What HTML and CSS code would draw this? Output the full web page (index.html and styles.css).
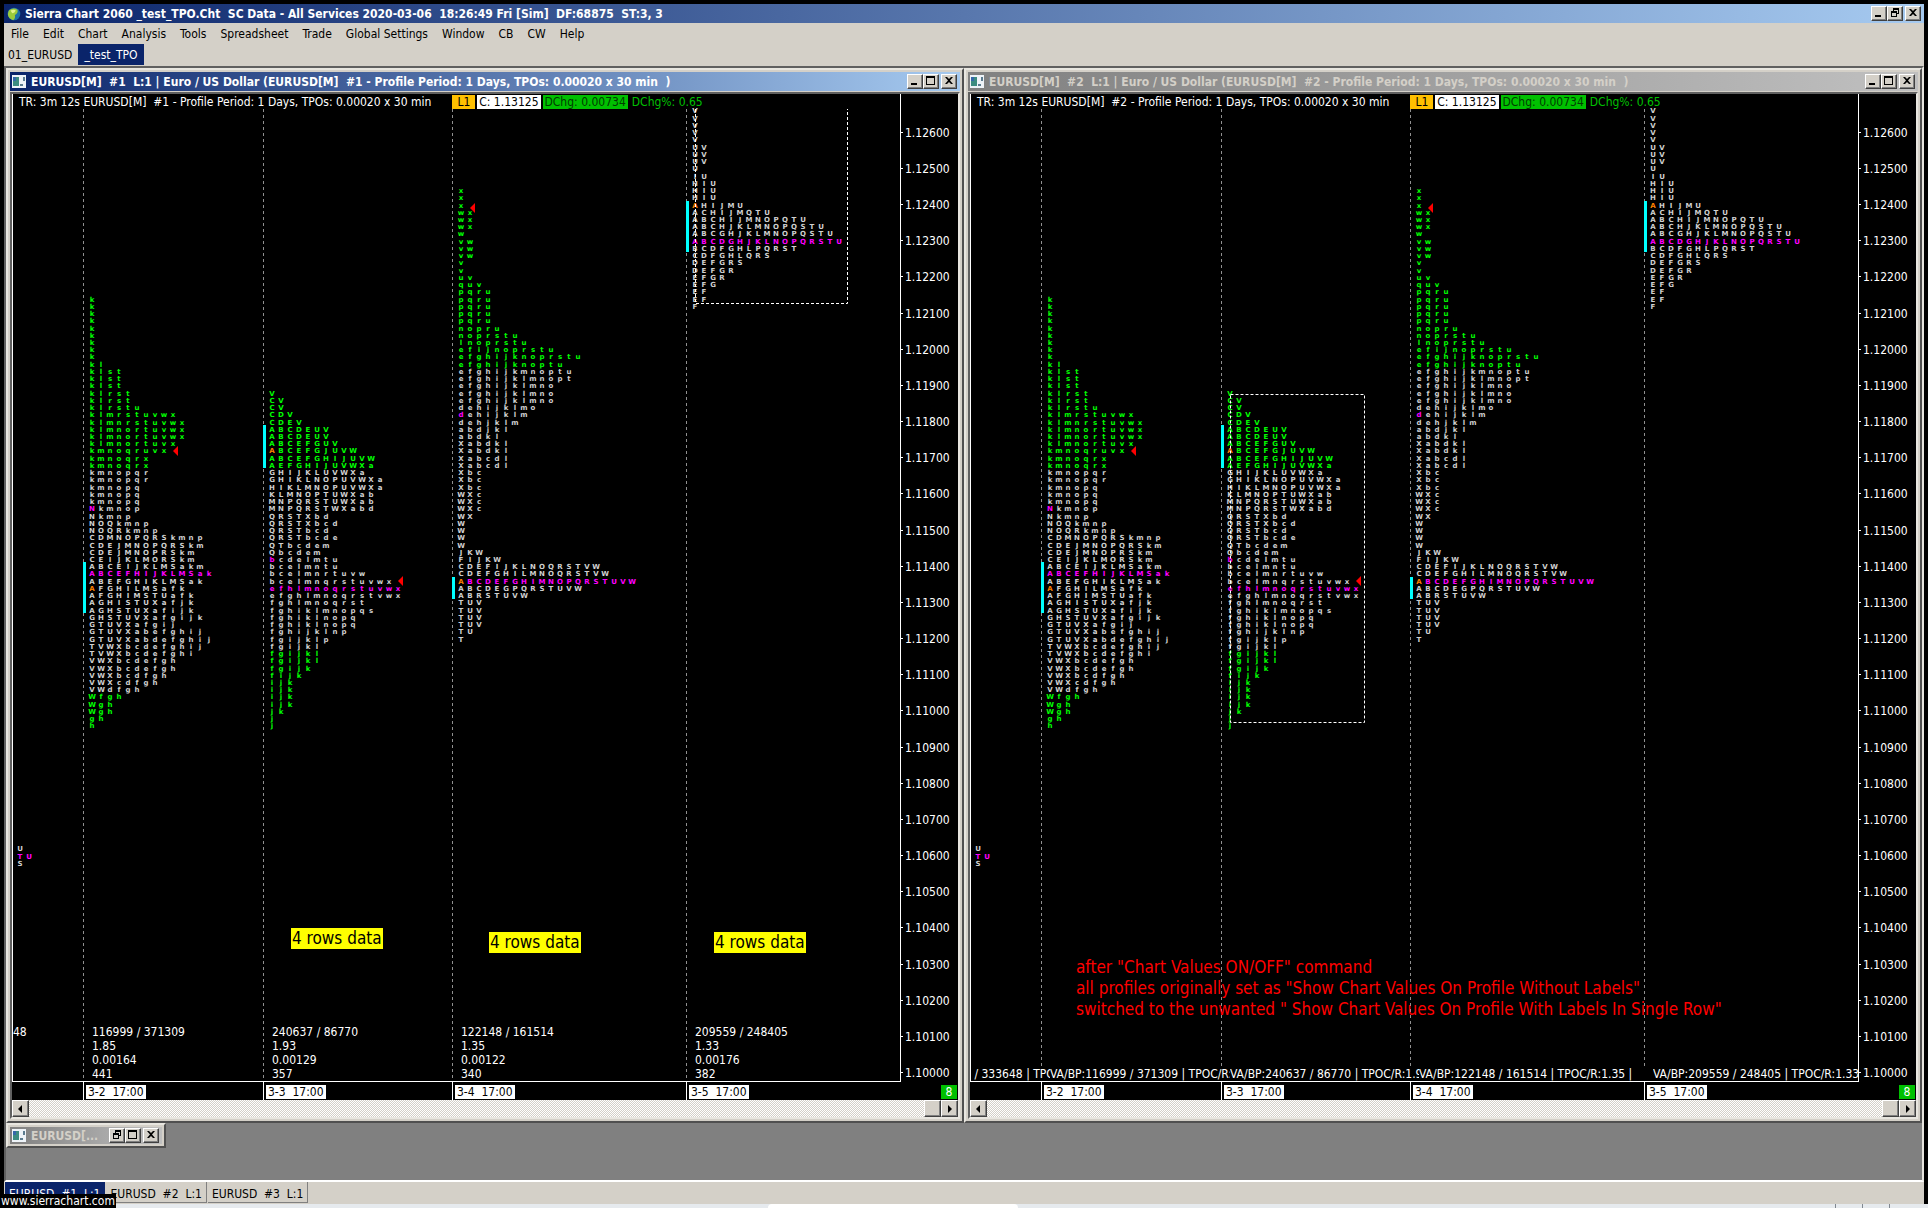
FILE: index.html
```html
<!DOCTYPE html>
<html lang="en">
<head>
<meta charset="utf-8">
<title>Sierra Chart 2060</title>
<link rel="stylesheet" href="styles.css">
</head>
<body>
<div class="app">
  <header class="titlebar titlebar-main">
    <svg class="app-icon" viewBox="0 0 16 16" aria-hidden="true"><circle cx="8" cy="8" r="7.2" fill="#1c6fa8"/><path d="M2 4Q7 0 12 3Q13 7 9 9Q10 13 7 15Q1 13 1 8Z" fill="#9ccb3b"/><path d="M4 4Q8 2 10 4Q9 7 6 7Z" fill="#e4f28c"/></svg>
    <h1 class="title-text">Sierra Chart 2060 _test_TPO.Cht  SC Data - All Services 2020-03-06  18:26:49 Fri [Sim]  DF:68875  ST:3, 3</h1>
    <div class="win-buttons">
      <button class="wb" aria-label="Minimize"><svg viewBox="0 0 12 10"><path d="M2 7h6v2H2z"/></svg></button>
      <button class="wb" aria-label="Restore"><svg viewBox="0 0 12 10"><path d="M4 0h6v6H8V5h1V2H5v1H4zM2 3h6v6H2zM3 5v3h4V5z" fill-rule="evenodd"/></svg></button>
      <button class="wb wb-close" aria-label="Close"><svg viewBox="0 0 12 10"><path d="M2 1h2l2 2 2-2h2L7 4.500l3 3.500H8L6 6 4 8H2l3-3.500z"/></svg></button>
    </div>
  </header>
  <nav class="menubar">
    <button>File</button><button>Edit</button><button>Chart</button><button>Analysis</button><button>Tools</button><button>Spreadsheet</button><button>Trade</button><button>Global Settings</button><button>Window</button><button>CB</button><button>CW</button><button>Help</button>
  </nav>
  <div class="booktabs">
    <button>01_EURUSD</button><button class="active">_test_TPO</button>
  </div>

  <main class="mdi">
    <div class="windows">
      <section class="window" id="w1">
        <header class="titlebar">
          <svg class="doc-icon" viewBox="0 0 14 13" aria-hidden="true"><path d="M0 0h14v13H0z" fill="#eef3f8"/><path d="M1 2h6v9H1z" fill="#3c8c80"/><path d="M1 2h3v4H1z" fill="#3568a8"/><path d="M8 9h3v2H8zM11 2h2v4h-2z" fill="#5c7c90"/></svg>
          <h2 class="title-text">EURUSD[M]  #1  L:1 | Euro / US Dollar (EURUSD[M]  #1 - Profile Period: 1 Days, TPOs: 0.00020 x 30 min  )</h2>
          <div class="win-buttons">
            <button class="wb" aria-label="Minimize"><svg viewBox="0 0 12 10"><path d="M2 7h6v2H2z"/></svg></button>
            <button class="wb" aria-label="Maximize"><svg viewBox="0 0 12 10"><path d="M1 0h9v9H1zM2 2v6h7V2z" fill-rule="evenodd"/></svg></button>
            <button class="wb wb-close" aria-label="Close"><svg viewBox="0 0 12 10"><path d="M2 1h2l2 2 2-2h2L7 4.500l3 3.500H8L6 6 4 8H2l3-3.500z"/></svg></button>
          </div>
        </header>
        <div class="client">
          <div class="chart">
            <div class="plot">
              <svg class="layer profiles"></svg>
              <div class="quote"><span class="q-name">TR: 3m 12s EURUSD[M]  #1 - Profile Period: 1 Days, TPOs: 0.00020 x 30 min</span><span class="q-link">L1</span><span class="q-last">C: 1.13125</span><span class="q-chg">DChg: 0.00734</span><span class="q-pct">DChg%: 0.65</span></div>
              <p class="note n1">4 rows data</p>
              <p class="note n2">4 rows data</p>
              <p class="note n3">4 rows data</p>
              <div class="stats"></div>
            </div>
            <div class="prices"><svg class="layer scale"></svg></div>
            <div class="times"><span class="feed">8</span></div>
          </div>
          <div class="scrollbar"><button class="sb" aria-label="Scroll left"><svg viewBox="0 0 5 8"><path d="M4 0v8L0 4z"/></svg></button><div class="track"></div><button class="sb" aria-label="Scroll position"></button><button class="sb" aria-label="Scroll right"><svg viewBox="0 0 5 8"><path d="M1 0v8l4-4z"/></svg></button></div>
        </div>
      </section>

      <section class="window inactive" id="w2">
        <header class="titlebar">
          <svg class="doc-icon" viewBox="0 0 14 13" aria-hidden="true"><path d="M0 0h14v13H0z" fill="#eef3f8"/><path d="M1 2h6v9H1z" fill="#3c8c80"/><path d="M1 2h3v4H1z" fill="#3568a8"/><path d="M8 9h3v2H8zM11 2h2v4h-2z" fill="#5c7c90"/></svg>
          <h2 class="title-text">EURUSD[M]  #2  L:1 | Euro / US Dollar (EURUSD[M]  #2 - Profile Period: 1 Days, TPOs: 0.00020 x 30 min  )</h2>
          <div class="win-buttons">
            <button class="wb" aria-label="Minimize"><svg viewBox="0 0 12 10"><path d="M2 7h6v2H2z"/></svg></button>
            <button class="wb" aria-label="Maximize"><svg viewBox="0 0 12 10"><path d="M1 0h9v9H1zM2 2v6h7V2z" fill-rule="evenodd"/></svg></button>
            <button class="wb wb-close" aria-label="Close"><svg viewBox="0 0 12 10"><path d="M2 1h2l2 2 2-2h2L7 4.500l3 3.500H8L6 6 4 8H2l3-3.500z"/></svg></button>
          </div>
        </header>
        <div class="client">
          <div class="chart">
            <div class="plot">
              <svg class="layer profiles"></svg>
              <div class="quote"><span class="q-name">TR: 3m 12s EURUSD[M]  #2 - Profile Period: 1 Days, TPOs: 0.00020 x 30 min</span><span class="q-link">L1</span><span class="q-last">C: 1.13125</span><span class="q-chg">DChg: 0.00734</span><span class="q-pct">DChg%: 0.65</span></div>
              <p class="remark">after "Chart Values ON/OFF" command<br>all profiles originally set as "Show Chart Values On Profile Without Labels"<br>switched to the unwanted " Show Chart Values On Profile With Labels In Single Row"</p>
              <div class="stats-row"></div>
            </div>
            <div class="prices"><svg class="layer scale"></svg></div>
            <div class="times"><span class="feed">8</span></div>
          </div>
          <div class="scrollbar"><button class="sb" aria-label="Scroll left"><svg viewBox="0 0 5 8"><path d="M4 0v8L0 4z"/></svg></button><div class="track"></div><button class="sb" aria-label="Scroll position"></button><button class="sb" aria-label="Scroll right"><svg viewBox="0 0 5 8"><path d="M1 0v8l4-4z"/></svg></button></div>
        </div>
      </section>
    </div>

    <div class="tray">
      <section class="window minimized inactive">
        <header class="titlebar">
          <svg class="doc-icon" viewBox="0 0 14 13" aria-hidden="true"><path d="M0 0h14v13H0z" fill="#eef3f8"/><path d="M1 2h6v9H1z" fill="#3c8c80"/><path d="M1 2h3v4H1z" fill="#3568a8"/><path d="M8 9h3v2H8zM11 2h2v4h-2z" fill="#5c7c90"/></svg>
          <h2 class="title-text">EURUSD[...</h2>
          <div class="win-buttons">
            <button class="wb" aria-label="Restore"><svg viewBox="0 0 12 10"><path d="M4 0h6v6H8V5h1V2H5v1H4zM2 3h6v6H2zM3 5v3h4V5z" fill-rule="evenodd"/></svg></button>
            <button class="wb" aria-label="Maximize"><svg viewBox="0 0 12 10"><path d="M1 0h9v9H1zM2 2v6h7V2z" fill-rule="evenodd"/></svg></button>
            <button class="wb wb-close" aria-label="Close"><svg viewBox="0 0 12 10"><path d="M2 1h2l2 2 2-2h2L7 4.500l3 3.500H8L6 6 4 8H2l3-3.500z"/></svg></button>
          </div>
        </header>
      </section>
    </div>
  </main>

  <div class="charttabs">
    <button class="active">EURUSD  #1  L:1</button><button>EURUSD  #2  L:1</button><button>EURUSD  #3  L:1</button>
  </div>
</div>
<footer class="desktop-strip"><span class="strip-tab"></span><span class="strip-cell"></span><span class="strip-cell"></span><span class="strip-cell"></span></footer>
<a class="watermark" href="#">www.sierrachart.com</a>
<script src="chart.js"></script>
</body>
</html>
```
FILE: styles.css
```css
* { box-sizing: border-box; }

body {
  margin: 0;
  height: 100vh;
  display: flex;
  flex-direction: column;
  background: #000;
  font-family: "DejaVu Sans Condensed", "DejaVu Sans", sans-serif;
  font-stretch: condensed;
  font-size: 12px;
  line-height: 14px;
  overflow: hidden;
}

h1, h2, p { margin: 0; font: inherit; }
button { font: inherit; color: inherit; white-space: pre; }

.app {
  flex: 1;
  min-height: 0;
  margin: 4px 4px 0;
  display: flex;
  flex-direction: column;
  background: #d4d0c8;
}

/* title bars */
.titlebar {
  height: 19px;
  flex: none;
  display: flex;
  align-items: center;
  gap: 5px;
  padding: 0 3px 0 2px;
  background: linear-gradient(90deg, #0a246a, #a6caf0);
  color: #fff;
}
.titlebar-main { gap: 4px; padding-left: 3px; }
.inactive .titlebar { background: linear-gradient(90deg, #808080, #c0c0c0); color: #d4d0c8; }
.title-text {
  flex: 1;
  min-width: 0;
  font-weight: bold;
  white-space: pre;
  overflow: hidden;
}
.app-icon { width: 14px; height: 16px; }
.doc-icon { width: 14px; height: 13px; flex: none; }
.win-buttons { display: flex; }
.wb, .sb {
  padding: 0;
  background: #d4d0c8;
  border: 1px solid;
  border-color: #fff #404040 #404040 #fff;
  box-shadow: inset -1px -1px #808080;
  display: flex;
}
.wb { width: 16px; height: 15px; }
.wb svg { width: 12px; height: 10px; margin: 1px; }
.wb-close { margin-left: 2px; }

/* menu and tabs */
.menubar { height: 21px; display: flex; gap: 14px; padding: 0 7px; }
.menubar button { border: 0; padding: 0; background: none; }
.booktabs { height: 22px; display: flex; align-items: flex-start; padding: 0 4px; }
.booktabs button { height: 21px; border: 0; padding: 0 6px 0 0; background: none; }
.booktabs .active { padding: 0 6px; background: #0a246a; color: #fff; }

/* document area */
.mdi {
  flex: 1;
  min-height: 0;
  display: flex;
  flex-direction: column;
  background: #808080;
  border: solid;
  border-width: 2px;
  border-color: #606060 #e8e6e0 #fff #606060;
}
.windows { flex: 1; min-height: 0; display: grid; grid-template-columns: 1fr 1fr; }
.window {
  min-width: 0;
  display: flex;
  flex-direction: column;
  padding: 2px;
  background: #d4d0c8;
  border: 2px solid;
  border-color: #e8e6e0 #505050 #505050 #e8e6e0;
}
.client {
  flex: 1;
  min-height: 0;
  margin-top: 1px;
  display: flex;
  flex-direction: column;
  border: 2px solid;
  border-color: #606060 #e8e6e0 #e8e6e0 #606060;
}
.tray { height: 57px; flex: none; display: flex; align-items: flex-start; }
.minimized { width: 160px; }
.minimized .titlebar { height: 17px; }

/* chart */
.chart {
  flex: 1;
  min-height: 0;
  display: grid;
  grid-template-columns: 1fr 57px;
  grid-template-rows: 1fr 18px;
  background: #000;
  color: #fff;
}
.plot {
  position: relative;
  overflow: hidden;
  border: solid #fff;
  border-width: 0 1px 1px;
}
.prices, .times { position: relative; }
.times { grid-column: 1 / 3; }
.layer { position: absolute; inset: 0; width: 100%; height: 100%; }
.scale text { fill: #fff; font-size: 12px; }
.scale path { stroke: #fff; }
.profiles text {
  font-family: "DejaVu Sans", sans-serif;
  font-stretch: normal;
  font-size: 7px;
  font-weight: bold;
  fill: #d0d0d0;
  text-anchor: middle;
}
.profiles .out { fill: #00ff00; }
.profiles .poc { fill: #ff00ff; }
.profiles .open { fill: #ff8000; }
.day { stroke: #909090; stroke-dasharray: 3 3; }
.selection { stroke: #fff; stroke-dasharray: 3 2; fill: none; }
.value-area { fill: #00ffff; }
.arrow { fill: #ff0000; }

.quote { position: relative; display: flex; gap: 2px; padding: 1px 0 0 6px; white-space: pre; }
.q-name { margin-right: 19px; }
.q-link { padding: 0 5px; background: #ffc000; color: #000; }
.q-last { padding: 0 2px; background: #fff; color: #000; }
.q-chg { padding: 0 2px; background: #00c000; color: #003c00; }
.q-pct { padding-left: 2px; color: #00c000; }

.note {
  position: absolute;
  height: 21px;
  padding: 0 1px;
  background: #ffff00;
  color: #000;
  font-size: 17px;
  line-height: 21px;
  white-space: nowrap;
}
.n1 { left: 278px; top: 834px; }
.n2 { left: 476px; top: 838px; }
.n3 { left: 701px; top: 838px; }
.remark {
  position: absolute;
  left: 105px;
  top: 863px;
  color: #ff0000;
  font-size: 17px;
  line-height: 21px;
  white-space: nowrap;
}
.stat { position: absolute; bottom: 0; white-space: pre; }
.stats-row { position: absolute; left: 0; right: 0; bottom: 0; display: flex; }
.stats-row span { flex: none; overflow: hidden; white-space: pre; background: #000; }
.stats-row span:last-child { flex: 1 1 0; min-width: 0; }

.time { position: absolute; top: -1px; bottom: 0; padding: 4px 0 0 2px; border-left: 1px solid #fff; }
.time span { display: block; height: 14px; padding: 0 2px; background: #fff; color: #000; white-space: pre; }
.feed {
  position: absolute;
  right: 1px;
  top: 3px;
  width: 16px;
  height: 14px;
  background: #00c000;
  text-align: center;
}

/* scroll bar */
.scrollbar { height: 17px; flex: none; display: flex; background: #d4d0c8; }
.track { flex: 1; background: repeating-conic-gradient(#fff 0 25%, #d4d0c8 0 50%) 0 0 / 2px 2px; }
.sb { width: 17px; height: 17px; align-items: center; justify-content: center; }
.sb svg { width: 5px; height: 8px; }

/* chart tabs */
.charttabs { height: 22px; flex: none; display: flex; padding: 0 1px; gap: 1px; }
.charttabs button {
  height: 21px;
  border: solid #808080;
  border-width: 0 1px 1px 0;
  padding: 4px 4px 0;
  background: none;
}
.charttabs .active { background: #0a246a; color: #fff; border-color: #0a246a; }

.desktop-strip { height: 4px; flex: none; display: flex; background: #e6eaee; padding-right: 12px; }
.strip-tab { width: 250px; margin-left: 768px; margin-right: auto; background: #fff; border-radius: 6px 6px 0 0; }
.strip-cell { width: 27px; border-left: 1px solid #808890; }
.watermark {
  position: absolute;
  left: 0;
  bottom: 0;
  padding: 0 1px;
  background: #000;
  color: #fff;
  text-decoration: none;
}
```
FILE: chart.js
```js
// Price scale: one TPO row is 0.0002; row 0 is 1.12600.
const ROW0 = 38.7;
const ROW_STEP = 7.234;
const COL = 9;
const rowY = n => ROW0 + n * ROW_STEP;

// Rows: text, with flags: + outside the value area, ! point of control,
// ^ first letter magenta, @ first letter is the open; *n repeats the row.
const profiles = [
  { x: -10, first: 99, rows: '.U|.TU!|.S', noLine: true },
  { x: 71, first: 23, date: '3-2  17:00', va: [468, 519], arrow: [161, 357],
    stats: ['116999 / 371309', '1.85', '0.00164', '441'],
    rows: 'k+*9|kl+|klst+*3|klrst+*2|klrstu+|klmrstuvwx+|klmnrstuvwx+|klmnortuvwx+*2|klmnortuvx+|kmnoqruvx+|kmnoqrx+*2|kmnopqr*2|kmnopq*3|Nkmnop^|Nkmnp|NOQkmnp|NOQRkmnp|CDMNOPQRSkmnp|CDEJMNOPQRSkm|CDEJMNOPRSkm|CEIJKLMORSkm|ABCEIJKLMSakm|ABCEFHIJKLMSak!|ABEFGHIKLMSak|AFGHILMSafk@|AFGHIMSTUafk|AGHISTUXafjk|AGHSTUXafijk|GHSTUVXafgijk|GTUVXafgij|GTUVXabefghij|GTUVXabdefghij|TVWXbcdefghij|TVWXbcdefghi|VWXbcdefgh*2|VWXbcdfgh|VWXcdfgh|VWdfgh|Wfgh+|Wgh+*2|gh+|h+' },
  { x: 251, first: 36, date: '3-3  17:00', va: [331, 374], arrow: [386, 487],
    stats: ['240637 / 86770', '1.93', '0.00129', '357'],
    rows: 'V+|CV+*2|CDV+|CDEV+|ABCDEUV+*2|ABCEFGUV+|ABCEFGJUVW+@|ABCEFGHIJUVW+|AEFGHIJUVWXa+|GHIJKLUVWXa|GHIKLNOPUVWXa|HIKLMNOPUVWXa|KLMNOPTUWXab|MNPQRSTUWXab|MNPQRSTWXabd|QRSTXbd|QRSTXbcd|QRSTbcd|QRSTbcde|QTbcdem|Qbcdem|bcdelmtu^|bcelmntu|bcelmnrtuvw|bcelmnqrstuvwx|efhlmnoqrstuvwx!|efghlmnoqrstvwx|fghlmnoqrst|fghiklmnopqs|fghiklnopq*2|fghijklnp|fgijklp|fgijkl|fgijkl+*2|fgijk+|fijk+|ijk+*4|jk+|j+*2' },
  { x: 440, first: 8, date: '3-4  17:00', va: [483, 505], arrow: [458, 114],
    stats: ['122148 / 161514', '1.35', '0.00122', '340'],
    rows: 'x+*3|wx+*3|w+|vw+*3|v+*2|uv+|quv+|pqru+*5|nopru+|noprstu+|lnoprstu+|efijnoprstu+|efghijknoprstu+|efghijknoptu+|efghijkmnoptu|efghijklmnopt|efghijklmno*3|dehijklmo|dehijklm^|dehjklm|abdjkl|abdkl|Xabdkl*2|Xabcdl*2|Xbc*3|WXc*3|WX|W*4|JKW|FIJKW|CDEFIJKLNOQRSTVW|CDEFGHILMNOQRSTVW|ABCDEFGHIMNOPQRSTUVW!@|ABCDEGPQRSTUVW|ABRSTUVW|TUV*4|TU|T' },
  { x: 674, first: -3, date: '3-5  17:00', va: [107, 158],
    stats: ['209559 / 248405', '1.33', '0.00176', '382'],
    rows: 'V*5|UV*3|U|IU|HIU*3|AHIJMU@|ACHIJMQTU|ABCHIJMNOPQTU|ABCHJKLMNOPQSTU|ABCGHJKLMNOPQSTU|ABCDGHJKLNOPQRSTU!|BCDFGHLPQRST|CDFGHLQRS|DEFGRS|DEFGR|EFGR|EFG|EF*2|F' }
];

function parseRows(src) {
  return src.split('|').flatMap(item => {
    const [, letters, flags, times] = item.match(/^([A-Za-z.]+)([+!^@]*)(?:\*(\d+))?$/);
    return Array(Number(times || 1)).fill({ letters, flags });
  });
}

function drawProfile(p) {
  let out = '';
  if (!p.noLine) {
    out += `<line class="day" x1="${p.x - 0.5}" x2="${p.x - 0.5}" y1="15" y2="985"/>`;
    out += `<rect class="value-area" x="${p.x - 1}" y="${p.va[0]}" width="3" height="${p.va[1] - p.va[0]}"/>`;
  }
  if (p.arrow) {
    const [x, y] = p.arrow;
    out += `<path class="arrow" d="M${x - 1} ${y}l5 -5v10z"/>`;
  }
  parseRows(p.rows).forEach(({ letters, flags }, i) => {
    const y = Math.round(rowY(p.first + i) + 2.5);
    const base = flags.includes('!') ? 'poc' : flags.includes('+') ? 'out' : '';
    const head = flags.includes('@') ? 'open' : flags.includes('^') ? 'poc' : base;
    [...letters].forEach((ch, col) => {
      if (ch === '.') return;
      out += `<text class="${col ? base : head}" x="${p.x + 8 + col * COL}" y="${y}">${ch}</text>`;
    });
  });
  return out;
}

const selections = {
  w1: 'M682.5 15V209.500H834.500V15',
  w2: 'M259.500 300.500H393.500V628.500H259.500Z'
};

for (const id of ['w1', 'w2']) {
  const win = document.getElementById(id);
  win.querySelector('.profiles').innerHTML =
    profiles.map(drawProfile).join('') + `<path class="selection" d="${selections[id]}"/>`;

  let scale = '';
  for (let i = 0; i <= 26; i++) {
    const y = Math.round(rowY(i * 5));
    const price = (1.126 - i * 0.001).toFixed(5);
    scale += `<path d="M0 ${y - 0.5}h2"/><text x="4" y="${y + 4}">${price}</text>`;
  }
  win.querySelector('.scale').innerHTML = scale;

  win.querySelector('.times').insertAdjacentHTML('beforeend', profiles.filter(p => p.date)
    .map(p => `<div class="time" style="left:${p.x}px"><span>${p.date}</span></div>`).join(''));
}

const dated = profiles.filter(p => p.date);
document.querySelector('#w1 .stats').innerHTML =
  '<div class="stat" style="left:0">48\n\n\n </div>' +
  dated.map(p => `<div class="stat" style="left:${p.x + 8}px">${p.stats.join('\n')}</div>`).join('');

let row = `<span style="width:${dated[0].x + 8}px"> / 333648 | TPOC/R:2.02</span>`;
dated.forEach((p, i) => {
  const width = i + 1 < dated.length ? dated[i + 1].x - p.x : 0;
  row += `<span style="width:${width}px">VA/BP:${p.stats[0]} | TPOC/R:${p.stats[1]} | </span>`;
});
document.querySelector('#w2 .stats-row').innerHTML = row;
```
